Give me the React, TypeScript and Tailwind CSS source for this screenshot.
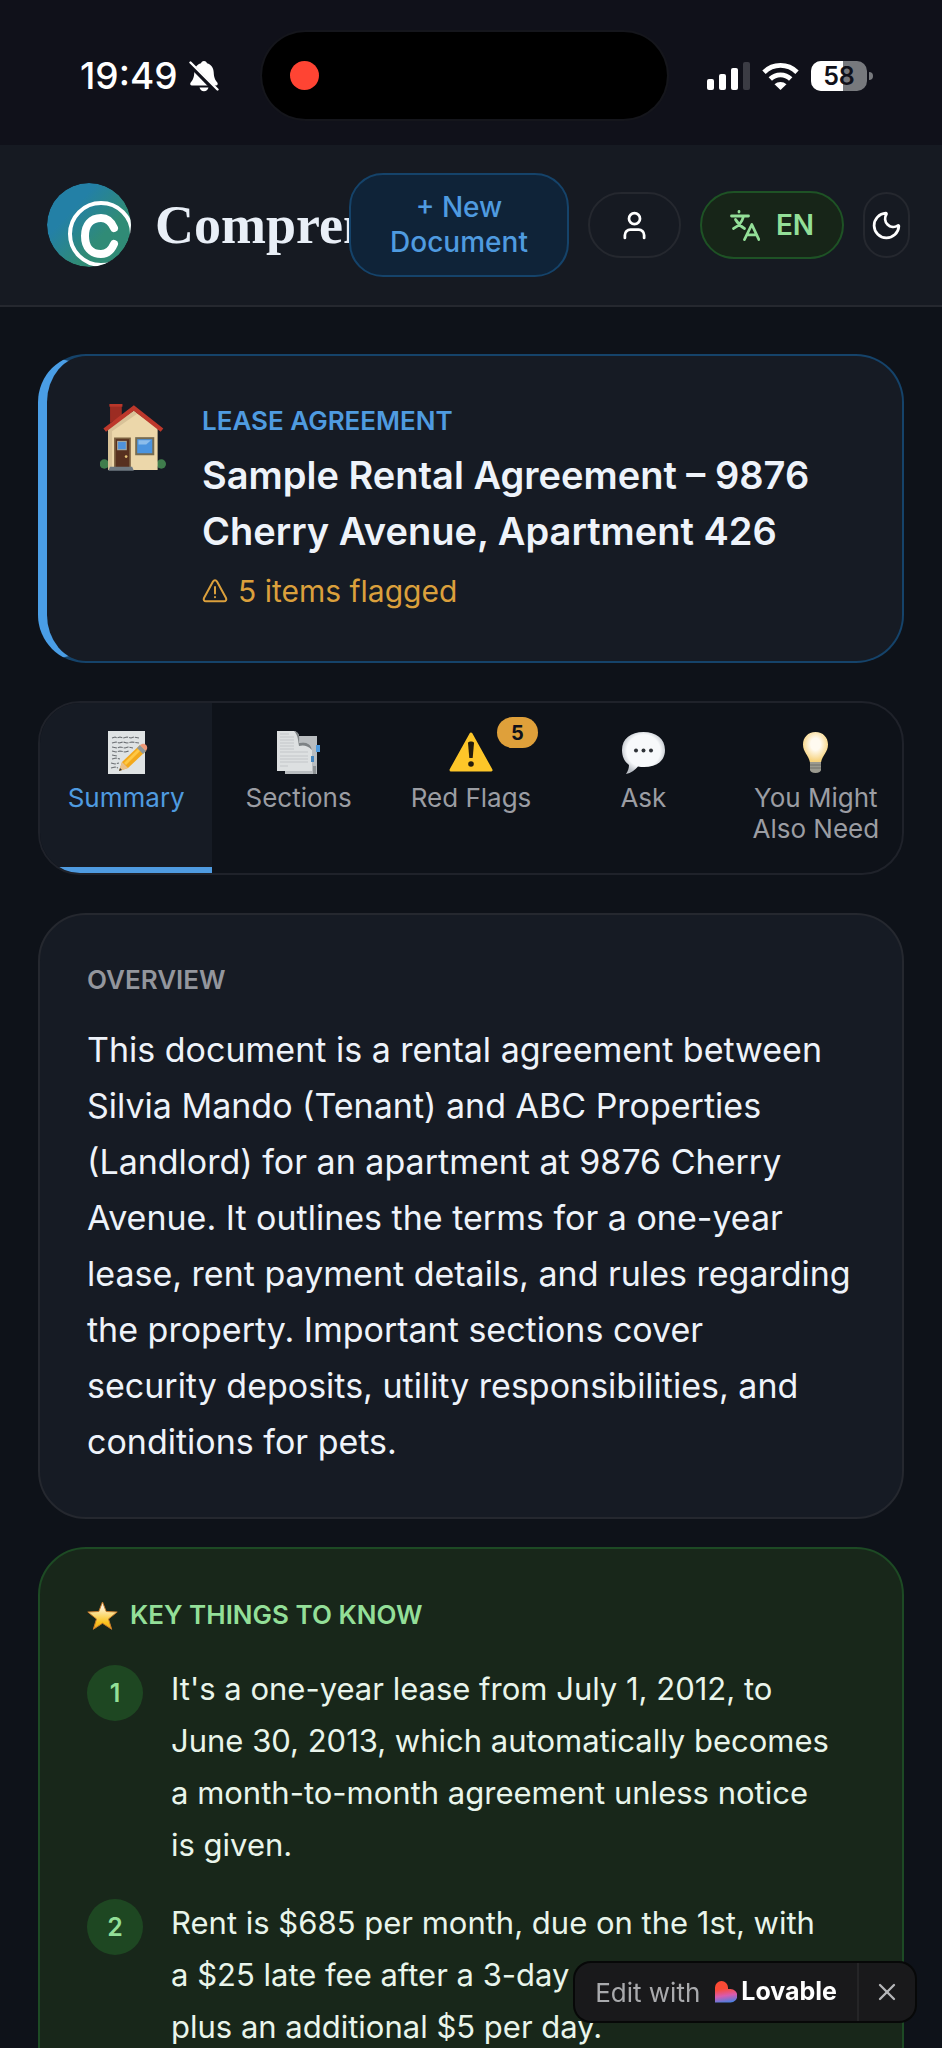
import { useState } from "react";
import type { ComponentType } from "react";
import { Moon, User, X } from "lucide-react";

type TabId = "summary" | "sections" | "flags" | "ask" | "related";

type Tab = {
  id: TabId;
  label: string;
  Icon: ComponentType;
  badge?: number;
};

const OVERVIEW = `This document is a rental agreement between
Silvia Mando (Tenant) and ABC Properties
(Landlord) for an apartment at 9876 Cherry
Avenue. It outlines the terms for a one-year
lease, rent payment details, and rules regarding
the property. Important sections cover
security deposits, utility responsibilities, and
conditions for pets.`;

const KEY_THINGS = [
  `It's a one-year lease from July 1, 2012, to
June 30, 2013, which automatically becomes
a month-to-month agreement unless notice
is given.`,
  `Rent is $685 per month, due on the 1st, with
a $25 late fee after a 3-day grace period,
plus an additional $5 per day.`,
];

function BellOffIcon() {
  return (
    <svg viewBox="0 0 30 32" className="h-8 w-[30px]" aria-hidden="true">
      <path
        d="M15 1c1.700 0 2.700 1 3 2.300 4.200 1.200 6.500 4.500 6.700 9 .2 5.200 1.300 7.600 3.600 10.200.9 1.100.4 3-1.400 3H3C1.200 25.500.7 23.700 1.700 22.500c2.300-2.600 3.400-5 3.600-10.200.2-4.500 2.500-7.800 6.700-9C12.300 2 13.300 1 15 1ZM10.500 27.500h9c-.6 2.300-2.200 3.700-4.500 3.700s-3.900-1.400-4.500-3.700Z"
        fill="#fff"
      />
      <path d="M-1 2 27 31" stroke="#10111a" strokeWidth="5" />
      <path d="M1.500 2.500 28.500 29.500" stroke="#fff" strokeWidth="2.400" strokeLinecap="round" />
    </svg>
  );
}

function SignalIcon() {
  return (
    <svg viewBox="0 0 43 28" className="h-7 w-[43px]" aria-hidden="true">
      <rect x="0" y="17" width="7" height="11" rx="2" fill="#fff" />
      <rect x="12" y="12" width="7" height="16" rx="2" fill="#fff" />
      <rect x="24" y="6" width="7" height="22" rx="2" fill="#fff" />
      <rect x="36" y="0" width="7" height="28" rx="2" fill="#3b3c44" />
    </svg>
  );
}

function WifiIcon() {
  return (
    <svg viewBox="0 0 37 28" className="h-7 w-[37px]" aria-hidden="true">
      <g fill="none" stroke="#fff" strokeWidth="4.800">
        <path d="M2 10.200a23.600 23.600 0 0 1 33 0" />
        <path d="M8.300 17a14.500 14.500 0 0 1 20.400 0" />
      </g>
      <path d="M12.500 22.300a8.700 8.700 0 0 1 12 0L18.500 28Z" fill="#fff" />
    </svg>
  );
}

function Battery({ level }: { level: number }) {
  return (
    <div className="flex items-center gap-0.5">
      <div className="relative flex h-[30px] w-14 items-center justify-center overflow-hidden rounded-[10px] bg-[#77797d]">
        <div className="absolute inset-y-0 left-0 bg-white" style={{ width: `${level}%` }} />
        <span className="relative text-[25px] leading-[30px] font-semibold text-[#10111a]">{level}</span>
      </div>
      <div className="h-2 w-1 rounded-r-full bg-[#77797d]" />
    </div>
  );
}

function StatusBar() {
  return (
    <div className="flex items-center bg-[#10111a] pt-8 pb-[26px] text-white">
      <div className="flex w-[262px] items-center gap-3 pl-20">
        <span className="text-[37px] leading-[44px] font-medium">19:49</span>
        <BellOffIcon />
      </div>
      <div className="flex h-[87px] w-[43%] items-center rounded-full bg-black pl-7 ring-2 ring-[#15161c]">
        <div className="h-[29px] w-[29px] rounded-full bg-[#ff4433]" />
      </div>
      <div className="flex flex-1 items-center justify-end gap-3 pr-[69px]">
        <SignalIcon />
        <WifiIcon />
        <Battery level={58} />
      </div>
    </div>
  );
}

function Logo() {
  return (
    <svg viewBox="0 0 84 84" className="h-[84px] w-[84px] shrink-0" aria-hidden="true">
      <defs>
        <linearGradient id="logo-fill" x1="0.15" y1="0.2" x2="0.85" y2="0.85">
          <stop offset="0.2" stopColor="#2380a6" />
          <stop offset="0.7" stopColor="#308b76" />
        </linearGradient>
        <clipPath id="logo-clip">
          <circle cx="42" cy="42" r="42" />
        </clipPath>
      </defs>
      <g clipPath="url(#logo-clip)">
        <circle cx="42" cy="42" r="42" fill="url(#logo-fill)" />
        <g fill="none" stroke="#fff">
          <circle cx="54" cy="51" r="31" strokeWidth="4" />
          <path d="M67 45C64 38 59.500 35 54 35c-10 0-16 7-16 18s6 18 16 18c5.500 0 10-3 13-10" strokeWidth="8" strokeLinecap="round" />
        </g>
      </g>
    </svg>
  );
}

function TranslateIcon() {
  return (
    <svg viewBox="0 0 30 31" className="h-[31px] w-[30px]" aria-hidden="true">
      <g fill="none" stroke="currentColor" strokeWidth="2.800" strokeLinecap="round" strokeLinejoin="round">
        <path d="M9 1.500V2M1.500 6h17M13.500 6.500C12 12 8 16.500 3.500 18.500M5.500 9.500C7.500 13 11 16.500 14.500 18.500" />
        <path d="M14.500 29.500 21.800 14.500l7 15M17.500 24.800h8.800" />
      </g>
    </svg>
  );
}

function HouseIcon() {
  return (
    <svg viewBox="30 28 197 200" className="mt-px h-[67px] w-[66px] shrink-0" aria-hidden="true">
      <path d="M60 30h35v35L60 85Z" fill="#9c2c22" />
      <path d="M58 28h39v8H58Z" fill="#b9372a" />
      <circle cx="43" cy="207" r="14" fill="#3f7d4c" />
      <circle cx="213" cy="207" r="14" fill="#3f7d4c" />
      <path d="M54 100 131 48l71 52v125H54Z" fill="#ecd7aa" />
      <path d="M54 100 131 50l10 7-75 52v116H54Z" fill="#d8c298" />
      <path d="m44 106 87-66 84 66" fill="none" stroke="#bd382b" strokeWidth="13" />
      <path d="M72 128h50v90H72Z" fill="#7b6040" />
      <path d="M77 133h40v85H77Z" fill="#57301f" />
      <path d="M81 138h29v28H81Z" fill="#a8aaa0" />
      <path d="M84 141h23v22H84Z" fill="#4f92dc" />
      <circle cx="108" cy="185" r="4" fill="#e8c678" />
      <path d="M135 127h57v54h-57Z" fill="#766c52" />
      <path d="M141 133h45v42h-45Z" fill="#4b94df" />
      <path d="M145 136h37l-14 13h-23Z" fill="#8cbdeb" />
      <path d="M60 215h66l5 12H55Z" fill="#6e7880" />
    </svg>
  );
}

function MemoIcon() {
  return (
    <svg viewBox="0 0 43 43" className="h-[43px] w-[43px]" aria-hidden="true">
      <path d="M3 0h37v43H3Z" fill="#dfe3e4" />
      <path
        d="m7 7 3-1 2 1 3-1 3 1 4-1 4 1 3-1 5 1M7 12l4-1 3 1 4-1 4 1 5-1 7 1M7 16l5 1 3-1 5 1 3-1 5 1M7 20l4 1 4-1 5 1 4-1M7 24l5 1M7 28l4-1 4 1M6 32l4 1 4-1M6 37l4-1 3 1"
        fill="none"
        stroke="#6c7074"
        strokeWidth="1.100"
        strokeDasharray="5 1"
      />
      <path d="m14 40 3-9 18-17 6 6-18 17Z" fill="#f3a91c" />
      <path d="m19 32 17-17 2 2-17 17Z" fill="#ffc844" />
      <path d="m14 40 3-9 6 6Z" fill="#e9c08b" />
      <path d="m14 40 1-3 2 2Z" fill="#333" />
      <path d="m32 17 3-3 6 6-3 3Z" fill="#8e979b" />
      <path d="m35 14 2-1c3-1 6 2 5 5l-1 2Z" fill="#ee9878" />
    </svg>
  );
}

function PagesIcon() {
  return (
    <svg viewBox="0 0 43 43" className="h-[43px] w-[43px]" aria-hidden="true">
      <path d="M8 5h32v38H8Z" fill="#b9bdc0" />
      <path d="M39 14h4v7h-4Z" fill="#4e9ade" />
      <path d="M0 0h17c5 1 6 5 5 12 7-2 12 1 13 7v21H0Z" fill="#dde0e1" />
      <path d="M17 0c5 1 6 5 5 12 7-2 12 1 13 7-5-5-9-5-13-4-1-6-1-11-5-15Z" fill="#7d8285" />
      <path d="M34 25h3v6h-3Z" fill="#4486bf" />
      <path d="M3 3h9M3 6h14M3 9h14M3 12h14M3 15h14M3 18h14M3 21h28M3 25h28M3 28h28M3 31h28M3 35h8" stroke="#c3c6c9" />
      <path d="M36 35h3v8h-3Z" fill="#8e9396" />
    </svg>
  );
}

function WarningIcon() {
  return (
    <svg viewBox="0 0 44 43" className="h-[43px] w-11" aria-hidden="true">
      <path d="M22 3 42 39H2Z" fill="#fdc629" stroke="#fdc629" strokeWidth="3" strokeLinejoin="round" />
      <path d="M19 12c0-2 6-2 6 0l-1.300 15h-3.400Z" fill="#231c0d" />
      <circle cx="22" cy="33" r="2.800" fill="#231c0d" />
    </svg>
  );
}

function SpeechIcon() {
  return (
    <svg viewBox="0 0 43 43" className="h-[43px] w-[43px]" aria-hidden="true">
      <defs>
        <radialGradient id="speech-fill" cx="0.5" cy="0.45" r="0.55">
          <stop offset="0.7" stopColor="#f7f9fb" />
          <stop offset="1" stopColor="#b9bec5" />
        </radialGradient>
      </defs>
      <path d="M21.500 1C34 1 43 7.500 43 19s-9 17-21 17c-2 0-4 0-6-.5C13 39 9 42 4 43c2-3 3-6 3-9C3 31 0 26 0 19 0 7.500 9 1 21.500 1Z" fill="url(#speech-fill)" />
      <g fill="#2f3338">
        <circle cx="14" cy="19.500" r="2" />
        <circle cx="21.500" cy="19.500" r="2" />
        <circle cx="29" cy="19.500" r="2" />
      </g>
    </svg>
  );
}

function BulbIcon() {
  return (
    <svg viewBox="0 0 43 43" className="h-[43px] w-[43px]" aria-hidden="true">
      <defs>
        <radialGradient id="bulb-fill" cx="0.5" cy="0.4" r="0.55">
          <stop offset="0.35" stopColor="#fffaf0" />
          <stop offset="1" stopColor="#f7d37e" />
        </radialGradient>
      </defs>
      <path d="M21.500 1C29 1 34 6.500 34 13.500c0 8-5.500 10-7 18h-11c-1.500-8-7-10-7-18C9 6.500 14 1 21.500 1Z" fill="url(#bulb-fill)" />
      <path d="M16 31h11v8c0 1-2 3-5.500 3S16 40 16 39Z" fill="#9b9a90" />
      <path d="M16 34h11M16 37h11" stroke="#6f6e68" />
    </svg>
  );
}

function StarIcon() {
  return (
    <svg viewBox="0 0 31 29" className="h-[29px] w-[31px]" aria-hidden="true">
      <defs>
        <linearGradient id="star-fill" x1="0" y1="0" x2="0" y2="1">
          <stop offset="0.2" stopColor="#fdf1d2" />
          <stop offset="0.75" stopColor="#fbc41f" />
          <stop offset="1" stopColor="#f0a81c" />
        </linearGradient>
      </defs>
      <path
        d="m15.500 1 3.700 9.500 11 .5-8.700 7 3.200 10.300-9.200-6-9.200 6L9.500 18 .8 11l11-.5Z"
        fill="url(#star-fill)"
        stroke="#c77b2c"
        strokeLinejoin="round"
      />
    </svg>
  );
}

function FlagIcon() {
  return (
    <svg viewBox="0 0 26 24" className="h-6 w-[26px]" aria-hidden="true">
      <g fill="none" stroke="currentColor" strokeWidth="2" strokeLinecap="round" strokeLinejoin="round">
        <path d="M11 2.500c1-1.600 3-1.600 4 0l9 16.500c.8 1.700 0 3.300-2 3.300H4c-2 0-2.800-1.600-2-3.300Z" />
        <path d="M13 8v6.500M13 18v.3" />
      </g>
    </svg>
  );
}

function LovableHeart() {
  return (
    <svg viewBox="0 0 22 22" className="h-[22px] w-[22px]" aria-hidden="true">
      <defs>
        <linearGradient id="heart-fill" x1="0.35" y1="0" x2="0.5" y2="1">
          <stop offset="0.35" stopColor="#fb4a35" />
          <stop offset="0.68" stopColor="#d85bb0" />
          <stop offset="1" stopColor="#4b7fe0" />
        </linearGradient>
      </defs>
      <path d="M0 6.500a6.500 6.500 0 0 1 13 0V8h2.500a6.800 6.800 0 0 1 0 13.600H0Z" fill="url(#heart-fill)" />
    </svg>
  );
}

const TABS: Tab[] = [
  { id: "summary", label: "Summary", Icon: MemoIcon },
  { id: "sections", label: "Sections", Icon: PagesIcon },
  { id: "flags", label: "Red Flags", Icon: WarningIcon, badge: 5 },
  { id: "ask", label: "Ask", Icon: SpeechIcon },
  { id: "related", label: "You Might Also Need", Icon: BulbIcon },
];

function Header() {
  return (
    <header className="flex items-center border-b-2 border-[#25282f] bg-[#161a22] py-7 pr-8 pl-[47px]">
      <Logo />
      <span className="ml-6 min-w-0 flex-1 overflow-hidden font-['Liberation_Serif',serif] text-[54px] leading-[64px] font-bold whitespace-nowrap text-[#e9eff7]">
        Compren
      </span>
      <div className="flex shrink-0 items-center gap-[19px]">
        <button
          type="button"
          className="w-[220px] rounded-[34px] border-2 border-[#15436a] bg-[#0f2338] px-8 py-[15px] text-[28px] leading-[35px] font-medium text-[#4f9be0]"
        >
          + New Document
        </button>
        <button
          type="button"
          aria-label="Account"
          className="flex h-[66px] w-[93px] items-center justify-center rounded-full border-2 border-[#25282f] text-white"
        >
          <User className="h-[33px] w-[33px]" />
        </button>
        <button
          type="button"
          className="flex h-[68px] w-36 items-center justify-center gap-4 rounded-full border-2 border-[#1e5225] bg-[#172518] text-[28px] leading-[36px] font-semibold text-[#93df98]"
        >
          <TranslateIcon />
          EN
        </button>
        <button
          type="button"
          aria-label="Toggle theme"
          className="flex h-[66px] w-[47px] items-center justify-center rounded-full border-2 border-[#25282f] text-white"
        >
          <Moon className="h-[33px] w-[33px] shrink-0" />
        </button>
      </div>
    </header>
  );
}

function DocumentCard() {
  return (
    <section className="flex items-start gap-9 rounded-[48px] border-2 border-l-9 border-[#15436a] border-l-[#4a9ee6] bg-[#161b24] pt-[47px] pr-10 pb-[48px] pl-[53px]">
      <HouseIcon />
      <div className="min-w-0 flex-1">
        <p className="text-[26px] leading-[36px] font-semibold text-[#4f9be0] uppercase">Lease Agreement</p>
        <h1 className="mt-2 text-[38px] leading-[56px] font-semibold text-[#eef3fa]">
          Sample Rental Agreement – 9876 Cherry Avenue, Apartment 426
        </h1>
        <p className="mt-2.5 flex items-center gap-2.5 text-[30px] leading-[44px] text-[#dba03c]">
          <FlagIcon />5 items flagged
        </p>
      </div>
    </section>
  );
}

function TabBar({ active, onSelect }: { active: TabId; onSelect: (id: TabId) => void }) {
  return (
    <nav role="tablist" className="mt-[38px] grid grid-cols-5 overflow-hidden rounded-[42px] border-2 border-[#1f222a]">
      {TABS.map(({ id, label, Icon, badge }) => (
        <button
          key={id}
          type="button"
          role="tab"
          aria-selected={id === active}
          onClick={() => onSelect(id)}
          className={`relative flex flex-col items-center border-b-6 px-5 pt-7 pb-[23px] text-[26px] leading-[31px] ${
            id === active ? "border-[#4f9be0] bg-[#161b24] text-[#4f9be0]" : "border-transparent text-[#9b9da3]"
          }`}
        >
          <Icon />
          <span className="mt-2">{label}</span>
          {badge !== undefined && (
            <span className="absolute top-3.5 left-1/2 ml-[26px] flex h-[31px] w-[41px] items-center justify-center rounded-full bg-[#dfa03a] text-[20px] leading-none font-bold text-[#10111a]">
              {badge}
            </span>
          )}
        </button>
      ))}
    </nav>
  );
}

function LovableBadge({ onClose }: { onClose: () => void }) {
  return (
    <aside className="fixed right-[27px] bottom-[27px] flex h-[58px] items-stretch rounded-[16px] bg-[#19191b] ring-2 ring-[#070808]">
      <a href="#lovable" className="flex items-center px-5 text-[26px] text-[#a9aaad]">
        Edit with
        <span className="ml-[15px]">
          <LovableHeart />
        </span>
        <span className="ml-1 text-[25px] font-bold text-white">Lovable</span>
      </a>
      <button
        type="button"
        aria-label="Close"
        onClick={onClose}
        className="flex w-[58px] items-center justify-center border-l-2 border-[#252527] text-[#b5b6b9]"
      >
        <X className="h-7 w-7" />
      </button>
    </aside>
  );
}

export default function App() {
  const [tab, setTab] = useState<TabId>("summary");
  const [showBadge, setShowBadge] = useState(true);

  return (
    <div className="flex h-screen flex-col overflow-hidden bg-[#0e1219] font-['Inter',sans-serif]">
      <StatusBar />
      <Header />
      <main className="min-h-0 flex-1 overflow-hidden px-[38px] pt-[47px]">
        <DocumentCard />
        <TabBar active={tab} onSelect={setTab} />

        <section className="mt-[38px] rounded-[48px] border-2 border-[#25282f] bg-[#161b24] px-[47px] pt-[47px] pb-[47px]">
          <h2 className="text-[26px] leading-[36px] font-semibold text-[#93969d] uppercase">Overview</h2>
          <p className="mt-6 text-[34px] leading-[56px] whitespace-pre-line text-[#eef3fa]">{OVERVIEW}</p>
        </section>

        <section className="mt-7 rounded-[48px] border-2 border-[#1d4a24] bg-[#18271a] px-[47px] pt-12 pb-[47px]">
          <h2 className="flex items-center gap-3 text-[26px] leading-[36px] font-semibold text-[#93df98] uppercase">
            <StarIcon />
            Key things to know
          </h2>
          <ol className="mt-[30px] flex flex-col gap-[26px]">
            {KEY_THINGS.map((text, i) => (
              <li key={text} className="flex items-start gap-7">
                <span className="mt-0.5 flex h-14 w-14 shrink-0 items-center justify-center rounded-full bg-[#1e4722] text-[25px] leading-none font-semibold text-[#93df98]">
                  {i + 1}
                </span>
                <p className="text-[31px] leading-[52px] whitespace-pre-line text-[#e9f5eb]">{text}</p>
              </li>
            ))}
          </ol>
        </section>
      </main>
      {showBadge && <LovableBadge onClose={() => setShowBadge(false)} />}
    </div>
  );
}
